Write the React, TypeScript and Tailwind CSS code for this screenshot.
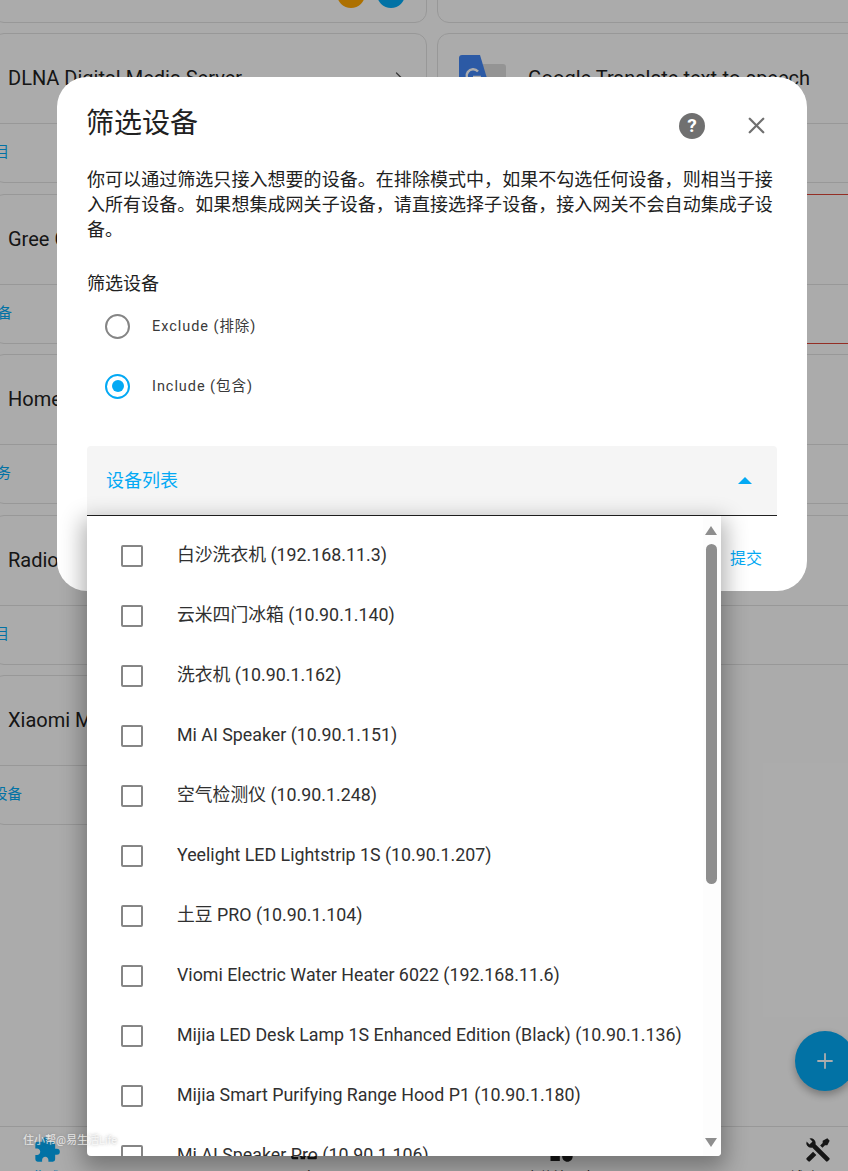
import { ChevronRight, Plus, X } from 'lucide-react'

const leftCards = [
  { title: '', action: '', box: 'w-[20px]' },
  { title: 'DLNA Digital Media Server', action: '1 个条目', box: 'w-[16px]' },
  { title: 'Gree Climate', action: '1 个设备', box: 'w-[19px]' },
  { title: 'Home Assistant', action: '1 个服务', box: 'w-[18px]' },
  { title: 'Radio Browser', action: '1 个条目', box: 'w-[16px]' },
  { title: 'Xiaomi Miot Auto', action: '12 个设备', box: 'w-[29px]' },
]

const rightCards = ['', 'Google Translate text-to-speech', 'Mobile App', 'Met.no', 'Sun']

const devices = [
  '白沙洗衣机 (192.168.11.3)',
  '云米四门冰箱 (10.90.1.140)',
  '洗衣机 (10.90.1.162)',
  'Mi AI Speaker (10.90.1.151)',
  '空气检测仪 (10.90.1.248)',
  'Yeelight LED Lightstrip 1S (10.90.1.207)',
  '土豆 PRO (10.90.1.104)',
  'Viomi Electric Water Heater 6022 (192.168.11.6)',
  'Mijia LED Desk Lamp 1S Enhanced Edition (Black) (10.90.1.136)',
  'Mijia Smart Purifying Range Hood P1 (10.90.1.180)',
  'Mi AI Speaker Pro (10.90.1.106)',
]

const navItems = [
  {
    label: '集成',
    active: true,
    path: 'M20.5,11H19V7C19,5.89 18.1,5 17,5H13V3.5A2.5,2.5 0 0,0 10.5,1A2.5,2.5 0 0,0 8,3.5V5H4A2,2 0 0,0 2,7V10.8H3.5C5,10.8 6.2,12 6.2,13.5C6.2,15 5,16.2 3.5,16.2H2V20A2,2 0 0,0 4,22H7.8V20.5C7.8,19 9,17.8 10.5,17.8C12,17.8 13.2,19 13.2,20.5V22H17A2,2 0 0,0 19,20V16H20.5A2.5,2.5 0 0,0 23,13.5A2.5,2.5 0 0,0 20.5,11Z',
  },
  {
    label: '设备',
    active: false,
    path: 'M3 6H21V4H3C1.9 4 1 4.9 1 6V18C1 19.1 1.9 20 3 20H7V18H3V6M13 12H9V13.78C8.39 14.33 8 15.11 8 16C8 16.89 8.39 17.67 9 18.22V20H13V18.22C13.61 17.67 14 16.88 14 16S13.61 14.33 13 13.78V12M11 17.5C10.17 17.5 9.5 16.83 9.5 16S10.17 14.5 11 14.5 12.5 15.17 12.5 16 11.83 17.5 11 17.5M22 8H16C15.5 8 15 8.5 15 9V19C15 19.5 15.5 20 16 20H22C22.5 20 23 19.5 23 19V9C23 8.5 22.5 8 22 8M21 18H17V10H21V18Z',
  },
  {
    label: '实体注册表',
    active: false,
    path: 'M11,13.5V21.5H3V13.5H11M12,2L17.5,11H6.5L12,2M17.5,13C20,13 22,15 22,17.5C22,20 20,22 17.5,22C15,22 13,20 13,17.5C13,15 15,13 17.5,13Z',
  },
  {
    label: '辅助工具',
    active: false,
    path: 'M21.71 20.29L20.29 21.71A1 1 0 0 1 18.88 21.71L7 9.85A3.81 3.81 0 0 1 6 10A4 4 0 0 1 2.22 4.7L4.76 7.24L5.29 6.71L6.71 5.29L7.24 4.76L4.7 2.22A4 4 0 0 1 10 6A3.81 3.81 0 0 1 9.85 7L21.71 18.88A1 1 0 0 1 21.71 20.29M2.29 18.88A1 1 0 0 0 2.29 20.29L3.71 21.71A1 1 0 0 0 5.12 21.71L10.59 16.25L7.76 13.42M20 2L16 4V6L13.83 8.17L15.83 10.17L18 8H20L22 4Z',
  },
]

function GoogleTranslateIcon() {
  return (
    <svg viewBox="0 0 48 48" className="w-[48px] h-[48px] shrink-0">
      <path d="M24 9h20a3 3 0 0 1 3 3v32a3 3 0 0 1-3 3H24z" fill="#dbdbdb" />
      <path d="M3 0h18l12 40H3a3 3 0 0 1-3-3V3a3 3 0 0 1 3-3z" fill="#4285f4" />
      <path d="M19 16.5a6.5 6.5 0 1 0 1.5 5.5H14" fill="none" stroke="#fff" strokeWidth="2.5" />
    </svg>
  )
}

function Card({ title, action, box, red, icon, chevron }: { title: string; action: string; box: string; red?: boolean; icon?: boolean; chevron?: boolean }) {
  return (
    <div className={`rounded-[12px] border flex flex-col ${red ? 'border-[#db4437]' : 'border-[#e0e0e0]'}`}>
      <div className={`h-[90px] flex items-center border-b border-[#e0e0e0] ${icon ? 'pl-[21px] gap-[21px]' : 'pl-[15px]'}`}>
        {icon && <GoogleTranslateIcon />}
        <span className="text-[20px] text-[#212121] whitespace-nowrap mb-[1px]">{title}</span>
        {chevron && <ChevronRight className="ml-auto mr-[17px] mb-[2px] text-[#555]" size={20} strokeWidth={1.6} />}
      </div>
      <div className={`flex-1 flex items-center justify-end ${box}`}>
        <span className="text-[14.5px] text-[#03a9f4] whitespace-nowrap">{action}</span>
      </div>
    </div>
  )
}

function Radio({ label, checked }: { label: string; checked?: boolean }) {
  return (
    <div className="h-[60px] flex items-center pl-[18px] gap-[22px]">
      <div className={`w-[25px] h-[25px] rounded-full border-2 flex items-center justify-center ${checked ? 'border-[#03a9f4]' : 'border-[#858585]'}`}>
        {checked && <div className="w-[12px] h-[12px] rounded-full bg-[#03a9f4]" />}
      </div>
      <span className="text-[14.5px] tracking-[0.95px] text-[#3a3a3a] pt-[1px]">{label}</span>
    </div>
  )
}

export default function App() {
  return (
    <div className="relative w-[848px] h-[1171px] overflow-hidden bg-[#fdfdfd] flex flex-col font-['Roboto','Noto_Sans_CJK_SC',sans-serif]">
      {/* page under the scrim */}
      <div className="flex-1 min-h-0 -ml-[8px] w-[880px]">
        <div className="-mt-[127.5px] grid grid-cols-2 gap-x-[10px] gap-y-[10.5px] auto-rows-[150px] items-start">
          {leftCards.map((c, i) => {
            const right = rightCards[i]
            return [
              <div key={`l${i}`} className="h-[150px] flex flex-col [&>div]:flex-1">
                <Card title={c.title} action={c.action} box={c.box} chevron={i === 1} />
              </div>,
              right !== undefined ? (
                <div key={`r${i}`} className="h-[150px] flex flex-col [&>div]:flex-1">
                  <Card title={right} action="" box="w-[20px]" icon={i === 1} red={i === 2} />
                </div>
              ) : (
                <div key={`r${i}`} />
              ),
            ]
          })}
        </div>
      </div>

      <div className="shrink-0 h-[45px] border-t border-[#e0e0e0] w-[1028px] -ml-[82px] grid grid-cols-4">
        {navItems.map((n) => (
          <div key={n.label} className="flex flex-col items-center pt-[9px]">
            <svg viewBox="0 0 24 24" className={`w-[28px] h-[28px] ${n.active ? 'fill-[#03a9f4]' : 'fill-[#212121]'}`}>
              <path d={n.path} />
            </svg>
            <span className={`mt-[6px] text-[14px] leading-[14px] whitespace-nowrap ${n.active ? 'text-[#03a9f4]' : 'text-[#212121]'}`}>{n.label}</span>
          </div>
        ))}
      </div>

      {/* status dots of the first row */}
      <div className="absolute left-[337px] -top-[20px] w-[28px] h-[28px] rounded-full bg-[#ffa600]" />
      <div className="absolute left-[377px] -top-[20px] w-[28px] h-[28px] rounded-full bg-[#03a9f4]" />

      <div className="absolute left-[795px] top-[1031px] w-[60px] h-[60px] rounded-[30px] bg-[#03a9f4] flex items-center justify-center shadow-[0_4px_8px_rgba(0,0,0,0.3)] text-white">
        <Plus size={24} strokeWidth={1.8} />
      </div>

      <div className="absolute inset-0 bg-black/32" />

      {/* dialog */}
      <div className="absolute left-[57px] top-[77px] w-[750px] h-[514px] bg-white rounded-[30px] px-[30px] flex flex-col">
        <div className="h-[90px] shrink-0 flex items-center">
          <h2 className="text-[28px] font-normal text-[#212121] mt-[4px] -ml-[1px]">筛选设备</h2>
          <div className="ml-auto flex items-center gap-[38px] pr-[7px] mt-[7px]">
            <div className="w-[26px] h-[26px] rounded-full bg-[#707070] flex items-center justify-center text-white text-[19px] font-bold leading-none">?</div>
            <X size={27} strokeWidth={2} className="text-[#707070]" />
          </div>
        </div>
        <p className="text-[18px] leading-[25px] tracking-[0.05px] text-[#212121]">
          你可以通过筛选只接入想要的设备。在排除模式中，如果不勾选任何设备，则相当于接入所有设备。如果想集成网关子设备，请直接选择子设备，接入网关不会自动集成子设备。
        </p>
        <div className="mt-[29px] text-[18px] leading-[25px] text-[#212121]">筛选设备</div>
        <div className="flex flex-col">
          <Radio label="Exclude (排除)" />
          <Radio label="Include (包含)" checked />
        </div>

        <div className="relative mt-[30px] h-[70px] shrink-0 bg-[#f5f5f5] rounded-t-[4px] border-b border-[#212121] flex items-center pl-[20px] pr-[20px]">
          <span className="text-[18px] text-[#03a9f4] -ml-[1px]">设备列表</span>
          <svg viewBox="0 0 14 7" className="ml-auto mr-[5px] w-[14px] h-[7px] fill-[#03a9f4]">
            <path d="M0 7L7 0L14 7Z" />
          </svg>

          <div className="absolute left-0 top-[70px] w-[634px] h-[640px] z-10 bg-white rounded-b-[4px] flex overflow-hidden shadow-[0_8px_22px_5px_rgba(0,0,0,0.3)]">
            <div className="flex-1 min-w-0 pt-[10px]">
              {devices.map((d) => (
                <div key={d} className="h-[60px] flex items-center pl-[34px] gap-[34px]">
                  <div className="w-[22px] h-[22px] shrink-0 rounded-[2px] border-2 border-[#858585]" />
                  <span className="text-[17.82px] text-[#303030] whitespace-nowrap mb-[1px]">{d}</span>
                </div>
              ))}
            </div>
            <div className="w-[18px] shrink-0 flex flex-col items-center bg-[#fdfdfd] pt-[10px] pb-[9px] pr-[2px]">
              <svg viewBox="0 0 12 9" className="w-[12px] h-[9px] fill-[#8e8e8e]">
                <path d="M6 0L12 9H0Z" />
              </svg>
              <div className="mt-[9px] w-[11px] h-[340px] bg-[#8e8e8e] rounded-[6px]" />
              <svg viewBox="0 0 12 9" className="mt-auto w-[12px] h-[9px] fill-[#8e8e8e]">
                <path d="M0 0H12L6 9Z" />
              </svg>
            </div>
          </div>
        </div>

        <div className="flex justify-end pr-[15px] pt-[31px]">
          <span className="text-[16px] leading-[24px] text-[#03a9f4]">提交</span>
        </div>
      </div>

      <div className="absolute left-[23px] top-[1134px] z-20 text-[11px] leading-[14px] text-white/75 [text-shadow:0_0_3px_rgba(120,120,120,0.6)] whitespace-nowrap">
        住小帮@易生活Life
      </div>
    </div>
  )
}
